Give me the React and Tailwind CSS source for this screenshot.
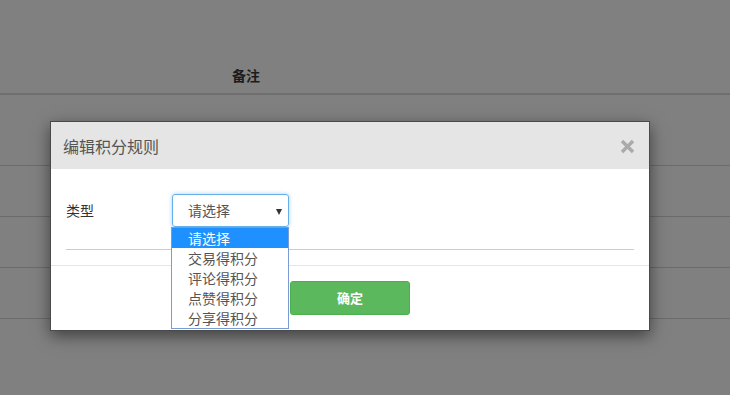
import React from "react";

const cjk = { fontFamily: '"Noto Sans CJK SC", "Noto Sans", sans-serif' };

export default function App() {
  const options = ["请选择", "交易得积分", "评论得积分", "点赞得积分", "分享得积分"];
  return (
    <div className="relative w-[730px] h-[395px] overflow-hidden bg-[#808080]" style={cjk}>
      {/* background table */}
      <div className="flex flex-col">
        <div className="h-[95px] flex items-end pb-[8px] border-b-2 border-[#6f6f6f]">
          <div className="ml-[232px] text-[14px] font-bold text-[#1c1c1c] leading-[20px]">备注</div>
        </div>
        <div className="h-[71px] border-b border-[#6b6b6b]" />
        <div className="h-[51px] border-b border-[#6b6b6b]" />
        <div className="h-[51px] border-b border-[#6b6b6b]" />
        <div className="h-[51px] border-b border-[#6b6b6b]" />
      </div>

      {/* modal */}
      <div className="absolute left-[50px] top-[121px] w-[600px] h-[210px] bg-white border border-[#4a4a4a] shadow-[0_5px_15px_rgba(0,0,0,0.5)] flex flex-col">
        <div className="h-[47px] bg-[#e5e5e5] flex items-center justify-between pl-[12px] pr-[14px]">
          <span className="text-[16px] text-[#555] leading-[22px]">编辑积分规则</span>
          <svg width="15" height="15" viewBox="0 0 15 15" className="mt-[2px]">
            <path d="M2 2 L13 13 M13 2 L2 13" stroke="#aaaaaa" strokeWidth="3.4" strokeLinecap="butt" />
          </svg>
        </div>
        <div className="h-[97px] px-[15px] pt-[25px] border-b border-[#e5e5e5]">
          <div className="flex items-center h-[33px]">
            <span className="w-[106px] text-[14px] text-[#333]">类型</span>
            <div className="relative w-[117px] h-[33px] border border-[#66afe9] rounded-[3px] shadow-[0_0_4px_rgba(102,175,233,0.6)] flex items-center pl-[15px]">
              <span className="text-[14px] text-[#555]">请选择</span>
              <span className="absolute right-[6px] top-[14px] w-0 h-0 border-l-[3.5px] border-r-[3.5px] border-t-[6px] border-l-transparent border-r-transparent border-t-[#333]" />
            </div>
          </div>
          <div className="mt-[22px] border-t border-[#cccccc]" />
        </div>
        <div className="flex-1 flex justify-center pt-[15px]">
          <button className="w-[120px] h-[34px] rounded-[3px] bg-[#5cb85c] border border-[#4cae4c] text-white text-[13px] font-bold">确定</button>
        </div>
      </div>

      {/* open dropdown */}
      <div className="absolute left-[171px] top-[227px] w-[118px] border border-[#7a9cd3] bg-white flex flex-col">
        {options.map((o, i) => (
          <div
            key={o}
            className={
              i === 0
                ? "h-[20px] pl-[16px] flex items-center text-[14px] bg-[#1e90ff] text-white"
                : "h-[20px] pl-[16px] flex items-center text-[14px] text-[#555]"
            }
          >
            {o}
          </div>
        ))}
      </div>
    </div>
  );
}
